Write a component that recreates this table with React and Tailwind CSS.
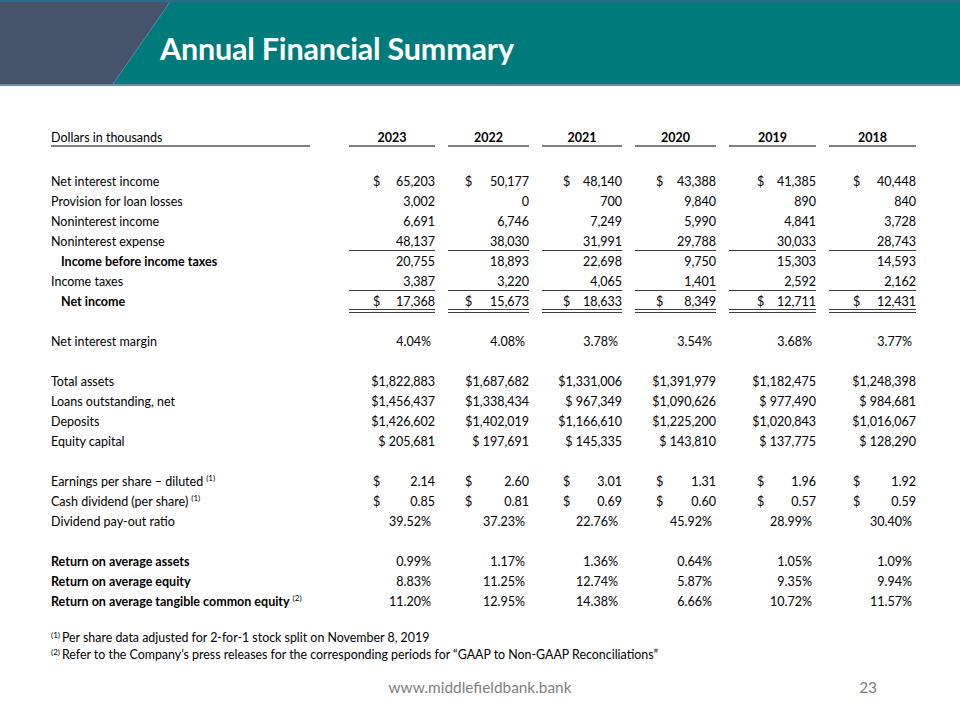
import React from "react";

const font = { fontFamily: "Lato, 'Open Sans', sans-serif" };

const years = ["2023", "2022", "2021", "2020", "2019", "2018"];

// left offset of the "$" inside each year column
const dollarPad = ["pl-[24px]", "pl-[17px]", "pl-[21px]", "pl-[21px]", "pl-[28px]", "pl-[24px]"];

const sections = [
  [
    { label: "Net interest income", acct: true, vals: ["65,203", "50,177", "48,140", "43,388", "41,385", "40,448"] },
    { label: "Provision for loan losses", vals: ["3,002", "0", "700", "9,840", "890", "840"] },
    { label: "Noninterest income", vals: ["6,691", "6,746", "7,249", "5,990", "4,841", "3,728"] },
    { label: "Noninterest expense", line: "single", vals: ["48,137", "38,030", "31,991", "29,788", "30,033", "28,743"] },
    { label: "Income before income taxes", bold: true, indent: true, vals: ["20,755", "18,893", "22,698", "9,750", "15,303", "14,593"] },
    { label: "Income taxes", line: "single", vals: ["3,387", "3,220", "4,065", "1,401", "2,592", "2,162"] },
    { label: "Net income", bold: true, indent: true, acct: true, line: "double", vals: ["17,368", "15,673", "18,633", "8,349", "12,711", "12,431"] },
  ],
  [{ label: "Net interest margin", vals: ["4.04%", "4.08%", "3.78%", "3.54%", "3.68%", "3.77%"] }],
  [
    { label: "Total assets", vals: ["$1,822,883", "$1,687,682", "$1,331,006", "$1,391,979", "$1,182,475", "$1,248,398"] },
    { label: "Loans outstanding, net", vals: ["$1,456,437", "$1,338,434", "$ 967,349", "$1,090,626", "$ 977,490", "$ 984,681"] },
    { label: "Deposits", vals: ["$1,426,602", "$1,402,019", "$1,166,610", "$1,225,200", "$1,020,843", "$1,016,067"] },
    { label: "Equity capital", vals: ["$ 205,681", "$ 197,691", "$ 145,335", "$ 143,810", "$ 137,775", "$ 128,290"] },
  ],
  [
    { label: "Earnings per share \u2013 diluted", sup: "(1)", acct: true, vals: ["2.14", "2.60", "3.01", "1.31", "1.96", "1.92"] },
    { label: "Cash dividend (per share)", sup: "(1)", acct: true, vals: ["0.85", "0.81", "0.69", "0.60", "0.57", "0.59"] },
    { label: "Dividend pay-out ratio", vals: ["39.52%", "37.23%", "22.76%", "45.92%", "28.99%", "30.40%"] },
  ],
  [
    { label: "Return on average assets", bold: true, vals: ["0.99%", "1.17%", "1.36%", "0.64%", "1.05%", "1.09%"] },
    { label: "Return on average equity", bold: true, vals: ["8.83%", "11.25%", "12.74%", "5.87%", "9.35%", "9.94%"] },
    { label: "Return on average tangible common equity", sup: "(2)", bold: true, vals: ["11.20%", "12.95%", "14.38%", "6.66%", "10.72%", "11.57%"] },
  ],
];

const Value = ({ row, v, i }) => {
  let border = "h-[17px]";
  if (row.line === "single") border = "h-[17px] border-b border-[#3f3f3f]";
  if (row.line === "double") border = "h-[19px] border-b-[4px] border-double border-[#3f3f3f]";

  if (row.acct) {
    return (
      <div className={`flex justify-between items-start leading-[16px] ${border} ${dollarPad[i]}`}>
        <span>$</span>
        <span>{v}</span>
      </div>
    );
  }
  const isPct = v.endsWith("%");
  return (
    <div className={`text-right leading-[16px] whitespace-pre ${border} ${isPct ? "pr-[4px]" : ""}`}>
      {v}
    </div>
  );
};

const Row = ({ row }) => (
  <>
    <div className={`h-5 leading-[16px] whitespace-nowrap ${row.bold ? "font-bold" : ""} ${row.indent ? "pl-[10px]" : ""}`}>
      {row.label}
      {row.sup && <sup className="text-[8px] ml-[3px] font-normal top-[-5px] relative">{row.sup}</sup>}
    </div>
    {row.vals.map((v, i) => (
      <div key={i} className="h-5">
        <Value row={row} v={v} i={i} />
      </div>
    ))}
  </>
);

const grid = "grid grid-cols-[285px_86px_81px_80px_81px_87px_87px] gap-x-[13px]";

export default function App() {
  return (
    <div className="w-[960px] h-[720px] bg-white text-black relative overflow-hidden" style={font}>
      {/* header band */}
      <div className="relative h-[86px] bg-[#007b7b] border-t-2 border-[#2e6b8c] border-b-2 border-b-[#6a8fab]">
        <svg className="absolute left-0 top-0" width="172" height="82" viewBox="0 0 172 82">
          <polygon points="0,0 170,0 113,82 0,82" fill="#46546b" />
          <line x1="170" y1="0" x2="113" y2="82" stroke="#5d8ca8" strokeWidth="1" />
        </svg>
        <h1 className="relative pl-[160px] pt-[28px] text-[30.5px] leading-[36px] font-bold text-white tracking-[-0.2px]">
          Annual Financial Summary
        </h1>
      </div>

      {/* table */}
      <div className="pl-[51px] pt-[44px] text-[12.5px]">
        <div className={`${grid} h-[17px]`}>
          <div className="w-[259px] border-b-2 border-[#7f7f7f] leading-[15px]">Dollars in thousands</div>
          {years.map((y) => (
            <div key={y} className="border-b-2 border-[#7f7f7f] text-center font-bold leading-[15px]">
              {y}
            </div>
          ))}
        </div>

        <div className="mt-[27px] flex flex-col gap-5">
          {sections.map((rows, s) => (
            <div key={s} className={grid}>
              {rows.map((r) => (
                <Row key={r.label} row={r} />
              ))}
            </div>
          ))}
        </div>

        {/* footnotes */}
        <div className="mt-[15px] text-[12.4px] leading-[17px]">
          <div>
            <sup className="text-[8px] mr-[2px]">(1)</sup>Per share data adjusted for 2-for-1 stock split on November 8, 2019
          </div>
          <div>
            <sup className="text-[8px] mr-[2px]">(2)</sup>Refer to the Company’s press releases for the corresponding periods for “GAAP to Non-GAAP Reconciliations”
          </div>
        </div>
      </div>

      {/* footer */}
      <div className="absolute left-0 right-0 top-[676px] flex items-center text-[15.4px] text-[#7f7f7f]">
        <div className="flex-1 text-center">www.middlefieldbank.bank</div>
        <div className="absolute right-[83px]">23</div>
      </div>
    </div>
  );
}
